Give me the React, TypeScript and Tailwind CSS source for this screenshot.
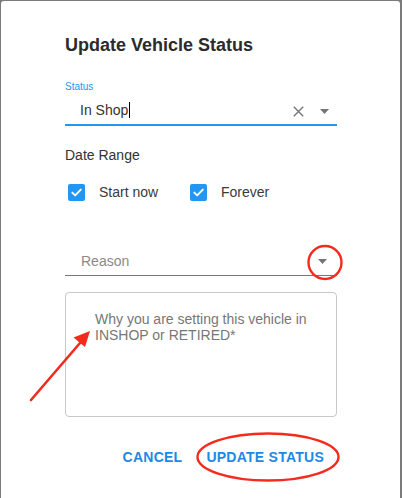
import React from "react";

const font = { fontFamily: '"Liberation Sans", Arial, sans-serif' };

function Caret({ className = "" }: { className?: string }) {
  return (
    <svg width="9" height="5" viewBox="0 0 9 5" className={className}>
      <polygon points="0,0 9,0 4.5,5" fill="#757575" />
    </svg>
  );
}

function Check({ label, className = "" }: { label: string; className?: string }) {
  return (
    <div className={`flex h-[20px] items-center ${className}`}>
      <span className="flex h-[17px] w-[17px] items-center justify-center rounded-[2px] bg-[#2196f3]">
        <svg width="13" height="13" viewBox="0 0 13 13">
          <path d="M2.3 6.6 L5.2 9.4 L10.8 3.6" fill="none" stroke="#fff" strokeWidth="1.9" strokeLinecap="round" strokeLinejoin="round" />
        </svg>
      </span>
      <span className="ml-[14px] text-[14px] leading-[20px] text-[#3a3a3a]">{label}</span>
    </div>
  );
}

export default function App() {
  return (
    <div className="relative h-[498px] w-[402px] overflow-hidden bg-[#7b7b7b] pl-px pt-px" style={font}>
      <div className="h-[497px] w-[399px] rounded-t-[3px] bg-white pl-[64px] pr-[63px] pt-[32px]">
        <h1 className="text-[18px] font-bold leading-[24px] text-[#2b2b2b]">Update Vehicle Status</h1>

        {/* status select */}
        <div className="mt-[24px] text-[10px] leading-[12px] text-[#2196f3]">Status</div>
        <div className="mt-[7px] border-b-2 border-[#2196f3] pb-[4px]">
          <div className="flex h-[20px] items-center pl-[15px] pr-[8px]">
            <span className="text-[14px] leading-[20px] text-[#333]">In Shop</span>
            <span className="ml-px h-[16px] w-px bg-black" />
            <div className="flex-1" />
            <svg width="11" height="11" viewBox="0 0 11 11" className="mt-[2px]">
              <path d="M0.8 0.8 L10.2 10.2 M10.2 0.8 L0.8 10.2" stroke="#777" strokeWidth="1.4" />
            </svg>
            <Caret className="ml-[16px] mt-[3px]" />
          </div>
        </div>

        <div className="mt-[19px] text-[14px] leading-[20px] text-[#333]">Date Range</div>
        <div className="mt-[17px] flex">
          <Check label="Start now" className="ml-[3px] w-[122px]" />
          <Check label="Forever" />
        </div>

        {/* reason select */}
        <div className="mt-[49px] border-b border-[#777] pb-[4px]">
          <div className="flex h-[20px] items-center pl-[16px] pr-[10px]">
            <span className="text-[14px] leading-[20px] text-[#8a8a8a]">Reason</span>
            <div className="flex-1" />
            <Caret className="mt-[1px]" />
          </div>
        </div>

        <div className="mt-[16px] h-[125px] rounded-[4px] border border-[#c8c8c8] pl-[29px] pr-[20px] pt-[18px]">
          <p className="text-[14px] leading-[16px] text-[#777]">
            Why you are setting this vehicle in INSHOP or RETIRED*
          </p>
        </div>

        <div className="mt-[30px] flex justify-end gap-[24px] pr-[13px]">
          <button className="text-[14px] font-bold leading-[20px] tracking-[0.25px] text-[#1e88e5]">CANCEL</button>
          <button className="text-[14px] font-bold leading-[20px] tracking-[0.25px] text-[#1e88e5]">UPDATE STATUS</button>
        </div>
      </div>

      {/* red annotations */}
      <svg className="pointer-events-none absolute left-0 top-0" width="402" height="498">
        <circle cx="325" cy="262.5" r="16.5" fill="none" stroke="#f42a1c" strokeWidth="2.4" />
        <ellipse cx="268" cy="457" rx="70.5" ry="23.5" fill="none" stroke="#f42a1c" strokeWidth="2.4" />
        <line x1="31" y1="400" x2="80" y2="343" stroke="#f42a1c" strokeWidth="2.6" strokeLinecap="round" />
        <polygon points="90,331 73.5,337.5 85,347" fill="#f42a1c" />
      </svg>
    </div>
  );
}
